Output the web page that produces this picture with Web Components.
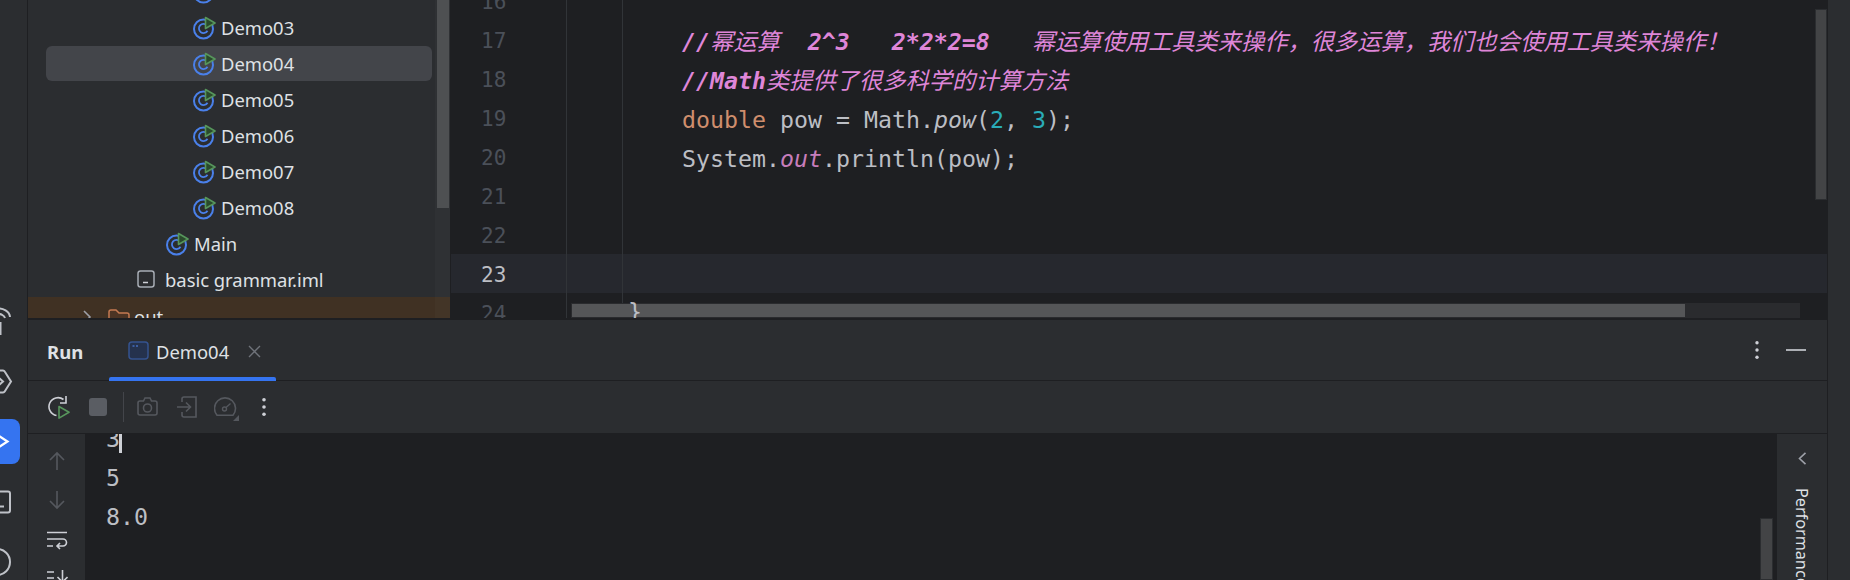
<!DOCTYPE html>
<html>
<head>
<meta charset="utf-8">
<style>
  html, body { margin: 0; height: 580px; overflow: hidden; background: #1e1f22; }
</style>
</head>
<body>
<ide-window>
  <tool-stripe slot="stripe"></tool-stripe>
  <project-tree slot="tree">
    <tree-row indent="193" kind="class">Demo02</tree-row>
    <tree-row indent="193" kind="class">Demo03</tree-row>
    <tree-row indent="193" kind="class" selected>Demo04</tree-row>
    <tree-row indent="193" kind="class">Demo05</tree-row>
    <tree-row indent="193" kind="class">Demo06</tree-row>
    <tree-row indent="193" kind="class">Demo07</tree-row>
    <tree-row indent="193" kind="class">Demo08</tree-row>
    <tree-row indent="166" kind="class">Main</tree-row>
    <tree-row indent="138" kind="iml">basic grammar.iml</tree-row>
    <tree-row indent="83" kind="folder" excluded>out</tree-row>
  </project-tree>
  <code-editor slot="editor"></code-editor>
  <run-panel slot="run"></run-panel>
</ide-window>

<script>
const MONO = `"DejaVu Sans Mono", "Noto Sans CJK SC", monospace`;
const UI = `"Noto Sans", "Open Sans", sans-serif`;

class IdeWindow extends HTMLElement {
    constructor() {
        super();
        this.attachShadow({ mode: 'open' });
        this.shadowRoot.innerHTML = `
            <style>
            :host {
                display: grid;
                width: 1850px;
                height: 580px;
                overflow: hidden;
                grid-template-columns: 28px 1fr 23px;
                grid-template-rows: 320px 260px;
                background: #2b2d30;
            }
            .stripe { grid-row: 1 / 3; }
            .top { display: flex; min-width: 0; overflow: hidden; border-bottom: 2px solid #1e1f22; box-sizing: border-box; }
            .run { grid-column: 2; grid-row: 2; min-width: 0; overflow: hidden; }
            .right { grid-column: 3; grid-row: 1 / 3; border-left: 1px solid #1e1f22; background: #2b2d30; }
            </style>
            <div class="stripe"><slot name="stripe"></slot></div>
            <div class="top"><slot name="tree"></slot><slot name="editor"></slot></div>
            <div class="run"><slot name="run"></slot></div>
            <div class="right"></div>
        `;
    }
}
customElements.define('ide-window', IdeWindow);

class ToolStripe extends HTMLElement {
    constructor() {
        super();
        this.attachShadow({ mode: 'open' });
        this.shadowRoot.innerHTML = `
            <style>
            :host {
                display: flex;
                flex-direction: column;
                gap: 15px;
                box-sizing: border-box;
                height: 580px;
                padding-top: 299px;
                overflow: hidden;
                background: #2b2d30;
                border-right: 1px solid #1e1f22;
            }
            .slot { flex: none; height: 45px; width: 20px; display: block; }
            .on { background: #3574f0; border-radius: 0 8px 8px 0; }
            svg { display: block; fill: none; stroke: #bfc2c8; stroke-width: 2; overflow: visible; }
            </style>
            <div class="slot"><svg width="20" height="45" viewBox="0 0 20 45"><path d="M10 18A12 9 0 0 0 -4 9.500"/><path d="M5 19A7 5 0 0 0 -3 15"/><path d="M.5 23v13"/></svg></div>
            <div class="slot"><svg width="20" height="45" viewBox="0 0 20 45"><path d="M-1 11.500h4a2 2 0 0 1 1.700 1l6.300 10l-6.300 10a2 2 0 0 1-1.700 1h-4"/><path d="M-1 19l4 3.500l-4 3.500"/></svg></div>
            <div class="slot on"><svg width="20" height="45" viewBox="0 0 20 45" style="stroke:#fff;stroke-width:2.200"><path d="M-1 17l8.500 5.500l-8.500 5.500"/></svg></div>
            <div class="slot"><svg width="20" height="45" viewBox="0 0 20 45"><path d="M-4 12.500h12a2 2 0 0 1 2 2v17a2 2 0 0 1-2 2h-12"/><path d="M-2 27.500h6"/></svg></div>
            <div class="slot"><svg width="20" height="45" viewBox="0 0 20 45"><circle cx="-3" cy="23" r="13"/></svg></div>
        `;
    }
}
customElements.define('tool-stripe', ToolStripe);

class ProjectTree extends HTMLElement {
    constructor() {
        super();
        this.attachShadow({ mode: 'open' });
        this.shadowRoot.innerHTML = `
            <style>
            :host { display: block; flex: none; position: relative; width: 422px; height: 318px; overflow: hidden; background: #2b2d30; }
            .rows { margin-top: -26px; }
            .thumb { position: absolute; top: 0; right: 1px; width: 12px; height: 208px; background: #4e5052; }
            .track { position: absolute; top: 0; right: 0; bottom: 0; width: 15px; background: rgba(255,255,255,.02); }
            </style>
            <div class="rows"><slot></slot></div>
            <div class="track"></div>
            <div class="thumb"></div>
        `;
    }
}
customElements.define('project-tree', ProjectTree);

const CLASS_ICON = `<svg width="24" height="24" viewBox="0 0 24 24" fill="none">
    <circle cx="11.500" cy="13" r="9.500" stroke="#4a80ea" stroke-width="2"/>
    <path d="M15.500 14.800a4.600 4.600 0 1 1 -.6 -5.500" stroke="#4a80ea" stroke-width="1.800"/>
    <path d="M13.500 1.500l9.500 5.500l-9.500 5.500z" fill="#2a4a2c" stroke="#57965c" stroke-width="1.600" stroke-linejoin="round"/>
</svg>`;
const IML_ICON = `<svg width="24" height="24" viewBox="0 0 24 24" fill="none">
    <rect x="1" y="3" width="16" height="16" rx="2.500" stroke="#a8adb5" stroke-width="1.500"/>
    <path d="M6 14.500h5" stroke="#ced0d6" stroke-width="1.500"/>
</svg>`;
const FOLDER_ICON = `<svg width="24" height="24" viewBox="0 0 24 24" fill="none">
    <path d="M1 24v-17a2 2 0 0 1 2 -2h5l3 3h8a2 2 0 0 1 2 2v14z" fill="#4c3424" stroke="#c57a52" stroke-width="1.500"/>
</svg>`;

class TreeRow extends HTMLElement {
    connectedCallback() {
        if (this.shadowRoot) return;
        this.attachShadow({ mode: 'open' });
        const kind = this.getAttribute('kind');
        const indent = this.getAttribute('indent');
        const excluded = this.hasAttribute('excluded');
        const icon = kind === 'class' ? CLASS_ICON : kind === 'iml' ? IML_ICON : FOLDER_ICON;
        const iconWidth = kind === 'class' ? 29 : kind === 'iml' ? 28 : 26;
        this.shadowRoot.innerHTML = `
            <style>
            :host {
                display: block;
                height: 36px;
                font: 18.4px ${UI};
                color: #dfe1e5;
                ${excluded ? 'background: #403123; margin-top: -1px;' : ''}
            }
            .row {
                display: flex;
                align-items: center;
                height: 35px;
                margin: 0 18px;
                padding-left: ${indent - 46 - 1}px;
                border-radius: 6px;
                ${this.hasAttribute('selected') ? 'background: #43454a;' : ''}
                ${excluded ? 'padding-top: 2px;' : ''}
            }
            .chev { flex: none; }
            svg { display: block; }
            .icon { flex: none; width: ${iconWidth}px; height: 24px; }
            .name { white-space: nowrap; line-height: 24px; }
            </style>
            <div class="row">
                ${excluded ? `<svg class="chev" width="26" height="24" viewBox="0 0 26 24" fill="none"><path d="M2 6l6 6l-6 6" stroke="#9da0a8" stroke-width="1.600"/></svg>` : ''}
                <span class="icon">${icon}</span>
                <span class="name"><slot></slot></span>
            </div>
        `;
    }
}
customElements.define('tree-row', TreeRow);

class CodeLine extends HTMLElement {
    connectedCallback() {
        if (this.shadowRoot) return;
        this.attachShadow({ mode: 'open' });
        const n = this.getAttribute('n');
        const current = this.hasAttribute('current');
        this.shadowRoot.innerHTML = `
            <style>
            :host {
                display: flex;
                height: 39px;
                line-height: 43px;
                white-space: pre;
                ${current ? 'background: #26282e;' : ''}
            }
            .num { flex: none; width: 119px; padding-left: 30px; box-sizing: border-box; font-size: 21px; color: ${current ? '#bcbec4' : '#4b5059'}; }
            .text { flex: 1; }
            </style>
            <span class="num">${n}</span><span class="text"><slot></slot></span>
        `;
    }
}
customElements.define('code-line', CodeLine);

class CodeEditor extends HTMLElement {
    constructor() {
        super();
        this.attachShadow({ mode: 'open' });
        this.shadowRoot.innerHTML = `
            <style>
            :host { display: block; flex: 1; position: relative; height: 318px; overflow: hidden; background: #1e1f22; border-left: 1px solid #1e1f22;
                font: 23.25px ${MONO}; color: #bcbec4; }
            .lines { margin-top: -19px; }
            .c { color: #df86d8; font-style: italic; }
            .c b { font-weight: bold; }
            .k { color: #cf8e6d; }
            .n { color: #2aacb8; }
            .f { font-style: italic; }
            .o { color: #c77dbb; font-style: italic; }
            .guide { position: absolute; top: 0; bottom: 0; width: 1px; background: #313438; }
            .vbar { position: absolute; top: 9px; right: 0; width: 12px; height: 191px; background: #434446; border: 1px solid #2b2d30; box-sizing: border-box; }
            .htrack { position: absolute; left: 120px; width: 1229px; top: 303px; height: 15px; background: #2a2b2e; }
            .hbar { position: absolute; left: 121px; top: 304px; width: 1113px; height: 13px; background: #555658; }
            .brace { position: absolute; left: 177px; top: 292px; line-height: 39px; }
            </style>
            <div class="lines">
                <code-line n="16"></code-line>
                <code-line n="17"><span>        </span><span class="c"><b>//</b>幂运算  <b>2^3   2*2*2=8</b>   幂运算使用工具类来操作，很多运算，我们也会使用工具类来操作！</span></code-line>
                <code-line n="18"><span>        </span><span class="c"><b>//Math</b>类提供了很多科学的计算方法</span></code-line>
                <code-line n="19"><span>        </span><span class="k">double</span> pow = Math.<span class="f">pow</span>(<span class="n">2</span>, <span class="n">3</span>);</code-line>
                <code-line n="20"><span>        </span>System.<span class="o">out</span>.println(pow);</code-line>
                <code-line n="21"></code-line>
                <code-line n="22"></code-line>
                <code-line n="23" current></code-line>
                <code-line n="24"></code-line>
            </div>
            <div class="guide" style="left:115px"></div>
            <div class="guide" style="left:171px"></div>
            <div class="vbar"></div>
            <div class="htrack"></div>
            <div class="hbar"></div>
            <div class="brace">}</div>
        `;
    }
}
customElements.define('code-editor', CodeEditor);

class RunPanel extends HTMLElement {
    constructor() {
        super();
        this.attachShadow({ mode: 'open' });
        this.shadowRoot.innerHTML = `
            <style>
            :host { display: grid; grid-template-rows: 61px 53px 1fr; height: 260px; background: #2b2d30; font-family: ${UI}; color: #dfe1e5; }
            .head { display: flex; align-items: center; position: relative; border-bottom: 1px solid #1e1f22; box-sizing: border-box; padding-left: 19px; }
            .title { font-size: 18.5px; font-weight: 700; width: 62px; margin-top: 3px; }
            .tab { position: relative; display: flex; align-items: center; height: 100%; width: 167px; box-sizing: border-box; padding-left: 19px; font-size: 18.4px; }
            .tab::after { content: ''; position: absolute; left: 0; right: 0; bottom: -1px; height: 4px; border-radius: 2px 2px 0 0; background: #3574f0; }
            .tab .name { margin: 3px 19px 0 7px; }
            .tab .close { margin-top: 3px; }
            .spacer { flex: 1; }
            .acts { display: flex; align-items: center; gap: 27px; padding-right: 21px; }
            .tools { display: flex; align-items: center; padding-left: 20px; border-bottom: 1px solid #1e1f22; box-sizing: border-box; }
            .tools svg, .head svg { display: block; flex: none; }
            .sep { width: 1px; height: 30px; background: #43454a; margin: 0 13px 0 16px; }
            .body { display: flex; min-height: 0; }
            .side { flex: none; width: 57px; background: #2b2d30; display: flex; flex-direction: column; align-items: center; padding-top: 17px; overflow: hidden; }
            .side svg { flex: none; display: block; }
            .console { flex: 1; position: relative; background: #1e1f22; overflow: hidden; font: 23.25px ${MONO}; color: #bcbec4; padding-left: 21px; }
            .out { margin-top: -15px; line-height: 39px; white-space: pre; }
            .caret { position: absolute; left: 34px; top: 0; width: 3px; height: 19px; background: #ced0d6; }
            .cbar { position: absolute; right: 3px; top: 84px; bottom: 0; width: 13px; background: #434446; border: 1px solid #2b2d30; box-sizing: border-box; }
            .perf { flex: none; width: 51px; background: #2b2d30; border-left: 1px solid #1e1f22; box-sizing: border-box; display: flex; flex-direction: column; align-items: center; padding-top: 18px; gap: 23px; overflow: hidden; }
            .perf svg { flex: none; display: block; }
            .perf span { writing-mode: vertical-rl; font-size: 16.2px; white-space: nowrap; color: #dfe1e5; }
            </style>
            <div class="head">
                <span class="title">Run</span>
                <div class="tab">
                    <svg width="21" height="19" viewBox="0 0 21 19" fill="none"><rect x="1" y="1" width="19" height="17" rx="3" fill="#25324d" stroke="#35538f" stroke-width="1.500"/><path d="M4.500 5h2M8 5h2" stroke="#548af7" stroke-width="1"/></svg>
                    <span class="name">Demo04</span>
                    <svg class="close" width="13" height="13" viewBox="0 0 13 13" fill="none"><path d="M1 1l11 11M12 1l-11 11" stroke="#6f737a" stroke-width="1.400"/></svg>
                </div>
                <span class="spacer"></span>
                <div class="acts">
                    <svg width="4" height="18" viewBox="0 0 4 18" fill="#ced0d6"><circle cx="2" cy="1.800" r="1.700"/><circle cx="2" cy="9" r="1.700"/><circle cx="2" cy="16.200" r="1.700"/></svg>
                    <svg width="20" height="4" viewBox="0 0 20 4" fill="none"><path d="M0 2h20" stroke="#ced0d6" stroke-width="1.600"/></svg>
                </div>
            </div>
            <div class="tools">
                <svg width="22" height="23" viewBox="0 0 22 23" fill="none"><path d="M8.500 19.500a9 9 0 1 1 7 -16" stroke="#ced0d6" stroke-width="1.600"/><path d="M18 0v7h-6" stroke="#ced0d6" stroke-width="1.600"/><path d="M11 10.500l10 5.800l-10 5.800z" stroke="#57965c" stroke-width="1.600" stroke-linejoin="round"/></svg>
                <span style="width:18px;height:18px;background:#5a5d63;border-radius:3px;margin-left:19px;flex:none"></span>
                <span class="sep"></span>
                <svg width="21" height="20" viewBox="0 0 21 20" fill="none" stroke="#55585e" stroke-width="1.600"><path d="M3 4h3.500l1.500 -3h5l1.500 3h3.500a2 2 0 0 1 2 2v10a2 2 0 0 1-2 2h-15a2 2 0 0 1-2 -2v-10a2 2 0 0 1 2 -2z"/><circle cx="10.500" cy="11" r="4"/></svg>
                <svg style="margin-left:19px" width="21" height="22" viewBox="0 0 21 22" fill="none" stroke="#55585e" stroke-width="1.600"><path d="M5 6v-3a2 2 0 0 1 2 -2h12v20h-12a2 2 0 0 1-2 -2v-3"/><path d="M0 11h13M9 6.500l4.500 4.500l-4.500 4.500"/></svg>
                <svg style="margin-left:16px" width="25" height="28" viewBox="0 0 25 28" fill="none"><path d="M3 22.200h16a10.500 10.500 0 1 0 -16 0z" stroke="#55585e" stroke-width="1.600" stroke-linejoin="round"/><circle cx="10.500" cy="16" r="2" stroke="#55585e" stroke-width="1.400"/><path d="M12 14.500l4.500 -4" stroke="#55585e" stroke-width="1.400"/><path d="M25 22v6h-6z" fill="#55585e"/></svg>
                <svg style="margin-left:23px" width="4" height="18" viewBox="0 0 4 18" fill="#ced0d6"><circle cx="2" cy="1.800" r="1.800"/><circle cx="2" cy="9" r="1.800"/><circle cx="2" cy="16.200" r="1.800"/></svg>
            </div>
            <div class="body">
                <div class="side">
                    <svg width="16" height="20" viewBox="0 0 16 20" fill="none" stroke="#55585e" stroke-width="1.600"><path d="M8 19v-17M1 9l7 -7l7 7"/></svg>
                    <svg style="margin-top:19px" width="16" height="20" viewBox="0 0 16 20" fill="none" stroke="#55585e" stroke-width="1.600"><path d="M8 1v17M1 11l7 7l7 -7"/></svg>
                    <svg style="margin-top:21px" width="22" height="19" viewBox="0 0 22 19" fill="none" stroke="#ced0d6" stroke-width="1.600"><path d="M1 1.500h20M1 8h16a3.500 3.500 0 0 1 0 7h-6M14 12l-3 3l3 3M1 15h6"/></svg>
                    <svg style="margin-top:20px" width="22" height="14" viewBox="0 0 22 14" fill="none" stroke="#ced0d6" stroke-width="1.600"><path d="M1 2h7M1 8h7M16.500 0v12M11.500 7l5 5l5 -5"/></svg>
                </div>
                <div class="console">
                    <div class="out">3
5
8.0</div>
                    <div class="caret"></div>
                    <div class="cbar"></div>
                </div>
                <div class="perf">
                    <svg width="9" height="13" viewBox="0 0 9 13" fill="none"><path d="M7.500 .8l-6 5.700l6 5.700" stroke="#9da0a8" stroke-width="1.600"/></svg>
                    <span>Performance</span>
                </div>
            </div>
        `;
    }
}
customElements.define('run-panel', RunPanel);
</script>
</body>
</html>
